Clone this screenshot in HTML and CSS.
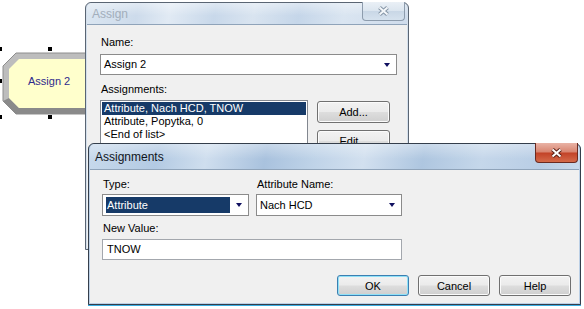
FILE: index.html
```html
<!DOCTYPE html>
<html lang="en">
<head>
  <meta charset="UTF-8">
  <title>Assign</title>
  <link rel="stylesheet" href="styles.css">
</head>
<body>
  <div class="canvas">
    <!-- Assign module on the model canvas -->
    <div class="module">
      <svg width="100" height="125" viewBox="0 0 100 125">
        <polygon points="16,53 100,53 100,114 16,114 3,101 3,66" fill="#bdbdbd" stroke="#8e8e8e" stroke-width="1"/>
        <polygon points="3,101 16,114 100,114 100,108 19,108 9,98" fill="#8a8a8a"/>
        <polygon points="19,59 100,59 100,108 19,108 9,98 9,69" fill="#ffffcc"/>
      </svg>
      <span class="module-label">Assign 2</span>
      <span class="handle h-tl"></span>
      <span class="handle h-tm"></span>
      <span class="handle h-ml"></span>
      <span class="handle h-bl"></span>
      <span class="handle h-bm"></span>
    </div>

    <!-- Assign dialog (inactive) -->
    <div class="window win-assign inactive">
      <div class="titlebar">
        <span class="title">Assign</span>
        <span class="close-btn">
          <svg width="13" height="10" viewBox="0 0 13 10">
            <path d="M2.5 1.5 L10.5 8.5 M10.5 1.5 L2.5 8.5" stroke="#8595a6" stroke-width="4" fill="none"/>
            <path d="M2.5 1.5 L10.5 8.5 M10.5 1.5 L2.5 8.5" stroke="#f4f7fa" stroke-width="2" fill="none"/>
          </svg>
        </span>
      </div>
      <div class="client assign-client">
        <div class="lbl">Name:</div>
        <div class="combo combo-name">
          <span class="combo-text">Assign 2</span>
          <span class="arrow"></span>
        </div>
        <div class="lbl lbl-assignments">Assignments:</div>
        <div class="list-row">
          <div class="listbox">
            <div class="list-item selected">Attribute, Nach HCD, TNOW</div>
            <div class="list-item">Attribute, Popytka, 0</div>
            <div class="list-item">&lt;End of list&gt;</div>
          </div>
          <div class="side-buttons">
            <button class="btn btn-side">Add...</button>
            <button class="btn btn-side btn-edit">Edit...</button>
          </div>
        </div>
      </div>
    </div>

    <!-- Assignments dialog (active) -->
    <div class="window win-assignments">
      <div class="titlebar">
        <span class="title">Assignments</span>
        <span class="close-btn close-active">
          <svg width="13" height="10" viewBox="0 0 13 10">
            <path d="M2.5 1.5 L10.5 8.5 M10.5 1.5 L2.5 8.5" stroke="#5a2118" stroke-width="4" fill="none"/>
            <path d="M2.5 1.5 L10.5 8.5 M10.5 1.5 L2.5 8.5" stroke="#ffffff" stroke-width="2" fill="none"/>
          </svg>
        </span>
      </div>
      <div class="client form-client">
        <div class="field-grid">
          <div class="lbl">Type:</div>
          <div class="lbl">Attribute Name:</div>
          <div class="combo combo-type">
            <span class="combo-sel">Attribute</span>
            <span class="arrow"></span>
          </div>
          <div class="combo combo-attr">
            <span class="combo-text">Nach HCD</span>
            <span class="arrow"></span>
          </div>
        </div>
        <div class="lbl lbl-value">New Value:</div>
        <div class="textbox">TNOW</div>
        <div class="button-row">
          <button class="btn btn-default">OK</button>
          <button class="btn">Cancel</button>
          <button class="btn">Help</button>
        </div>
      </div>
    </div>
  </div>
</body>
</html>
```

FILE: styles.css
```css
* {
  box-sizing: border-box;
}

body {
  margin: 0;
  background: #fff;
  font-family: "Liberation Sans", Arial, sans-serif;
  font-size: 11px;
  color: #000;
}

.canvas {
  position: relative;
  width: 584px;
  height: 309px;
  overflow: hidden;
}

/* model module */
.module {
  position: absolute;
  left: 0;
  top: 0;
  width: 100px;
  height: 125px;
}

.module svg {
  display: block;
}

.module-label {
  position: absolute;
  left: 28px;
  top: 75px;
  line-height: 13px;
  color: #2e2a8c;
}

.handle {
  position: absolute;
  width: 4px;
  height: 4px;
  background: #000;
}

.h-tl { left: -2px; top: 47px; }
.h-tm { left: 48px; top: 47px; }
.h-ml { left: -2px; top: 79px; }
.h-bl { left: -2px; top: 115px; }
.h-bm { left: 48px; top: 115px; }

/* windows */
.window {
  position: absolute;
  display: flex;
  flex-direction: column;
  border: 1px solid #343e4b;
  border-radius: 6px 6px 0 0;
  background: #bcd0e6;
  padding: 0 1px 1px;
}

.win-assign {
  left: 85px;
  top: 2px;
  width: 324px;
  height: 248px;
  border-color: #5a6573;
  background: #d3dfec;
}

.win-assignments {
  left: 88px;
  top: 143px;
  width: 493px;
  height: 162px;
  box-shadow: 0 1px 0 #3aaee2;
}

.titlebar {
  position: relative;
  display: flex;
  align-items: center;
  padding-left: 5px;
  border-radius: 5px 5px 0 0;
  background:
    linear-gradient(180deg, rgba(255,255,255,0.35), rgba(255,255,255,0) 60%),
    linear-gradient(100deg, #c7d9ec 0%, #b3cae3 14%, #cfdeee 24%, #a9c2de 36%, #bfd3e8 46%, #d2e0ef 56%, #aec6e0 68%, #c5d7ea 80%, #b8cde5 92%, #c9daec 100%);
}

.win-assign .titlebar {
  height: 21px;
  background:
    linear-gradient(180deg, rgba(255,255,255,0.4), rgba(255,255,255,0) 60%),
    linear-gradient(100deg, #dbe6f1 0%, #cddbeb 16%, #e1eaf4 26%, #c8d8ea 40%, #d9e4f0 52%, #c5d6e9 66%, #dae5f1 80%, #cfdcec 100%);
}

.win-assignments .titlebar {
  height: 25px;
}

.title {
  font-size: 12px;
  line-height: 14px;
  color: #10151c;
}

.inactive .title {
  color: #a2aebb;
}

.close-btn {
  position: absolute;
  top: -1px;
  right: 2px;
  width: 43px;
  height: 19px;
  display: flex;
  align-items: center;
  justify-content: center;
  border: 1px solid #8d9cad;
  border-top: none;
  border-radius: 0 0 4px 4px;
  background: linear-gradient(180deg, #eaf0f6 0%, #dbe5ef 50%, #c9d7e6 51%, #d6e2ee 100%);
}

.close-active {
  right: 1px;
  height: 20px;
  border-color: #6b2a20;
  background: linear-gradient(180deg, #e9b3a6 0%, #d8846f 48%, #c24227 52%, #d46a4a 100%);
}

.client {
  flex: 1;
  background: #f0f0f0;
  border-top: 1px solid #8fa3b9;
}

/* Assign dialog contents */
.assign-client {
  padding: 11px 0 0 13px;
}

.lbl {
  line-height: 13px;
  padding-left: 1px;
  white-space: nowrap;
}

.combo {
  position: relative;
  height: 21px;
  background: #fff;
  border: 1px solid #8b8b8b;
  display: flex;
  align-items: center;
}

.combo-text {
  padding-left: 3px;
  line-height: 13px;
}

.arrow {
  position: absolute;
  right: 6px;
  top: 50%;
  margin-top: -2px;
  width: 0;
  height: 0;
  border-left: 3.5px solid transparent;
  border-right: 3.5px solid transparent;
  border-top: 4px solid #101060;
}

.combo-name {
  width: 297px;
  margin-top: 5px;
}

.lbl-assignments {
  margin-top: 8px;
}

.list-row {
  display: flex;
  align-items: flex-start;
  margin-top: 4px;
}

.listbox {
  width: 208px;
  height: 60px;
  background: #fff;
  border: 1px solid #82878f;
  padding: 1px;
}

.list-item {
  height: 13px;
  line-height: 13px;
  padding-left: 2px;
  white-space: nowrap;
}

.list-item.selected {
  background: #163a68;
  color: #fff;
}

.side-buttons {
  display: flex;
  flex-direction: column;
  margin-left: 9px;
  margin-top: 1px;
}

.btn {
  width: 72px;
  height: 21px;
  padding: 0;
  font-family: "Liberation Sans", Arial, sans-serif;
  font-size: 11px;
  color: #000;
  border: 1px solid #707070;
  border-radius: 3px;
  background: linear-gradient(180deg, #f2f2f2 0%, #ebebeb 48%, #dddddd 52%, #cfcfcf 100%);
  box-shadow: inset 0 0 0 1px #fbfbfb;
}

.btn-side {
  width: 73px;
  height: 22px;
}

.btn-edit {
  margin-top: 7px;
}

.btn-default {
  border-color: #3c7fb1;
  box-shadow: inset 0 0 0 1px #8fe1f8;
}

/* Assignments dialog contents */
.form-client {
  padding: 8px 0 0 12px;
}

.field-grid {
  display: grid;
  grid-template-columns: 147px 146px;
  column-gap: 7px;
}

.field-grid .combo {
  margin-top: 3px;
  height: 22px;
}

.combo-sel {
  margin-left: 3px;
  width: 124px;
  height: 16px;
  line-height: 16px;
  padding-left: 1px;
  background: #163a68;
  color: #fff;
}

.combo-attr .combo-text {
  padding-left: 3px;
}

.lbl-value {
  margin-top: 6px;
}

.textbox {
  margin-top: 4px;
  width: 300px;
  height: 21px;
  line-height: 19px;
  padding-left: 4px;
  background: #fff;
  border: 1px solid #a3a7ad;
}

.button-row {
  display: flex;
  justify-content: flex-end;
  gap: 9px;
  margin-top: 15px;
  padding-right: 8px;
}
```
